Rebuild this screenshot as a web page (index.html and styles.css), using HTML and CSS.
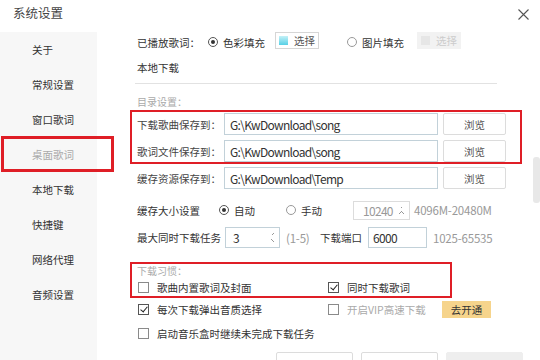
FILE: index.html
```html
<!DOCTYPE html>
<html lang="zh-CN">
  <head>
    <meta charset="UTF-8" />
    <meta name="viewport" content="width=device-width, initial-scale=1.0" />
    <title>系统设置</title>
    <link rel="stylesheet" href="styles.css">
  </head>
  <body>
    <div class="titlebar">
      <span class="title">系统设置</span>
      <svg class="close" width="11" height="11" viewBox="0 0 11 11">
        <path d="M0.5 0.5 L10.5 10.5 M10.5 0.5 L0.5 10.5" stroke="#555" stroke-width="1.1" fill="none" />
      </svg>
    </div>

    <div class="layout">
      <div class="sidebar">
        <div class="nav-item">关于</div>
        <div class="nav-item">常规设置</div>
        <div class="nav-item">窗口歌词</div>
        <div class="nav-item active">桌面歌词</div>
        <div class="nav-item">本地下载</div>
        <div class="nav-item">快捷键</div>
        <div class="nav-item">网络代理</div>
        <div class="nav-item">音频设置</div>
      </div>

      <div class="main">
        <div class="row lyric-row">
          <span class="lbl lbl-lyric">已播放歌词：</span>
          <span class="opt opt-color"><i class="radio checked"></i>色彩填充</span>
          <span class="pick-btn"><i class="swatch"></i>选择</span>
          <span class="opt opt-image"><i class="radio"></i>图片填充</span>
          <span class="pick-btn disabled"><i class="swatch"></i>选择</span>
        </div>

        <div class="section-title">本地下载</div>
        <div class="divider"></div>

        <div class="hint">目录设置：</div>
        <div class="mark mark-dirs">
          <div class="row path-row">
            <span class="lbl lbl-path">下载歌曲保存到：</span>
            <span class="input path-input">G:\KwDownload\song</span>
            <span class="browse">浏览</span>
          </div>
          <div class="row path-row">
            <span class="lbl lbl-path">歌词文件保存到：</span>
            <span class="input path-input">G:\KwDownload\song</span>
            <span class="browse">浏览</span>
          </div>
        </div>
        <div class="row path-row cache-row">
          <span class="lbl lbl-path">缓存资源保存到：</span>
          <span class="input path-input">G:\KwDownload\Temp</span>
          <span class="browse">浏览</span>
        </div>

        <div class="row size-row">
          <span class="lbl lbl-size">缓存大小设置</span>
          <span class="opt opt-auto"><i class="radio checked"></i>自动</span>
          <span class="opt opt-manual"><i class="radio"></i>手动</span>
          <span class="input spin-input disabled size-input">10240<i class="spin"></i></span>
          <span class="note">4096M-20480M</span>
        </div>

        <div class="row task-row">
          <span class="lbl lbl-task">最大同时下载任务</span>
          <span class="input spin-input task-input">3<i class="spin"></i></span>
          <span class="note range">(1-5)</span>
          <span class="lbl lbl-port">下载端口</span>
          <span class="input port-input">6000</span>
          <span class="note">1025-65535</span>
        </div>

        <div class="mark mark-habit">
          <div class="hint habit-hint">下载习惯：</div>
          <div class="row check-row">
            <span class="check-col"><i class="checkbox"></i>歌曲内置歌词及封面</span>
            <span class="check-col"><i class="checkbox checked"></i>同时下载歌词</span>
          </div>
        </div>
        <div class="row check-row quality-row">
          <span class="check-col"><i class="checkbox checked"></i>每次下载弹出音质选择</span>
          <span class="check-col muted"><i class="checkbox"></i>开启VIP高速下载</span>
          <span class="vip-btn">去开通</span>
        </div>
        <div class="row check-row resume-row">
          <span class="check-col"><i class="checkbox"></i>启动音乐盒时继续未完成下载任务</span>
        </div>

        <div class="footer">
          <span class="foot-btn"></span>
          <span class="foot-btn"></span>
          <span class="foot-btn grey"></span>
        </div>

        <div class="scroll-thumb"></div>
      </div>
    </div>
  </body>
</html>
```

FILE: styles.css
```css
body {
  margin: 0;
  width: 540px;
  height: 360px;
  overflow: hidden;
  background: #fff;
  color: #333;
  font-family: "Noto Sans CJK SC", "Noto Sans", sans-serif;
  font-size: 10.5px;
}
.titlebar {
  height: 32px;
  display: flex;
  align-items: center;
  justify-content: space-between;
  padding: 0 11px 0 13px;
  box-sizing: border-box;
}
.title {
  font-size: 12.5px;
  color: #444;
  margin-top: -8px;
}
.close {
  margin-top: -4px;
}
.layout {
  display: flex;
  height: 328px;
}
.sidebar {
  width: 97px;
  flex: none;
  background: #f7f7f7;
}
.nav-item {
  height: 35px;
  line-height: 35px;
  padding-left: 32px;
  color: #333;
  position: relative;
}
.nav-item.active {
  color: #aaa;
}
.nav-item.active::after {
  content: "";
  position: absolute;
  left: 1px;
  top: -1px;
  width: 113px;
  height: 36px;
  border: 3px solid #df1e26;
  box-sizing: border-box;
}
.main {
  flex: 1;
  position: relative;
  padding-left: 40px;
}
.row {
  display: flex;
  align-items: center;
}
.lbl {
  flex: none;
  white-space: nowrap;
}
.lyric-row {
  height: 20px;
}
.lbl-lyric {
  width: 71px;
}
.opt {
  display: inline-flex;
  align-items: center;
  flex: none;
}
.opt-color {
  width: 67px;
}
.opt-image {
  width: 70px;
  margin-left: 28px;
}
.radio {
  width: 10px;
  height: 10px;
  border: 1px solid #999;
  border-radius: 50%;
  box-sizing: border-box;
  margin-right: 5px;
  position: relative;
  flex: none;
}
.radio.checked {
  border-color: #555;
}
.radio.checked::after {
  content: "";
  position: absolute;
  left: 2px;
  top: 2px;
  width: 4px;
  height: 4px;
  border-radius: 50%;
  background: #333;
}
.pick-btn {
  width: 44px;
  height: 17px;
  box-sizing: border-box;
  border: 1px solid #d6d6d6;
  display: inline-flex;
  align-items: center;
  padding-left: 3px;
  color: #555;
  flex: none;
  margin-top: -3px;
}
.swatch {
  width: 9px;
  height: 9px;
  margin-right: 6px;
  background: linear-gradient(#c4f1f7, #57d0e6);
}
.pick-btn.disabled {
  background: #f2f2f2;
  border-color: #f2f2f2;
  color: #ccc;
}
.pick-btn.disabled .swatch {
  background: #e6e6e6;
}
.section-title {
  height: 20px;
  line-height: 20px;
  margin-top: 6px;
}
.divider {
  margin: 5px 0 0 -2px;
  width: 362px;
  border-top: 1px solid #e2e2e2;
}
.hint {
  height: 14px;
  line-height: 14px;
  font-size: 10px;
  color: #aaa;
  margin-top: 11px;
}
.mark {
  border: 2px solid #df1e26;
  margin-left: -7px;
  padding-left: 5px;
}
.mark-dirs {
  width: 374px;
  padding: 1px 9px 0 5px;
  margin-top: 1px;
  display: flex;
  flex-direction: column;
  gap: 5px;
}
.path-row {
  height: 22px;
}
.lbl-path {
  width: 87px;
  color: #444;
}
.input {
  height: 22px;
  box-sizing: border-box;
  border: 1px solid #c2d1d9;
  background: #fff;
  display: inline-flex;
  align-items: center;
  flex: none;
  font-size: 12px;
  letter-spacing: -0.7px;
  color: #333;
  position: relative;
}
.path-input {
  width: 214px;
  padding-left: 5px;
}
.browse {
  width: 63px;
  height: 22px;
  margin-left: 5px;
  box-sizing: border-box;
  border: 1px solid #dcdcdc;
  border-radius: 2px;
  display: inline-flex;
  align-items: center;
  justify-content: center;
  color: #555;
  flex: none;
}
.cache-row {
  margin-top: 3px;
}
.size-row {
  height: 20px;
  margin-top: 11px;
}
.lbl-size {
  width: 82px;
}
.opt-auto {
  width: 67px;
}
.opt-manual {
  width: 67px;
}
.size-input {
  width: 57px;
  height: 19px;
  padding-left: 9px;
  border-color: #dcdcdc;
  color: #999;
}
.spin {
  position: absolute;
  right: 5px;
  top: 50%;
  width: 5px;
  height: 9px;
  margin-top: -5px;
  background:
    linear-gradient(45deg, transparent 50%, #999 50%, #999 62%, transparent 62%) 0 0 / 3px 3px no-repeat,
    linear-gradient(-45deg, transparent 50%, #999 50%, #999 62%, transparent 62%) 2px 0 / 3px 3px no-repeat,
    linear-gradient(135deg, transparent 50%, #999 50%, #999 62%, transparent 62%) 0 6px / 3px 3px no-repeat,
    linear-gradient(-135deg, transparent 50%, #999 50%, #999 62%, transparent 62%) 2px 6px / 3px 3px no-repeat;
}
.note {
  margin-left: 4px;
  color: #999;
  font-size: 11.5px;
  letter-spacing: -0.2px;
  flex: none;
}
.task-row {
  height: 21px;
  margin-top: 7px;
}
.lbl-task {
  width: 88px;
}
.task-input {
  width: 55px;
  height: 21px;
  padding-left: 7px;
}
.range {
  width: 34px;
  margin-left: 6px;
}
.lbl-port {
  width: 48px;
}
.port-input {
  width: 59px;
  height: 21px;
  padding-left: 4px;
}
.port-input + .note {
  margin-left: 6px;
}
.mark-habit {
  width: 313px;
  margin-top: 14px;
}
.habit-hint {
  margin-top: 0;
}
.check-row {
  height: 18px;
}
.check-col {
  width: 190px;
  display: inline-flex;
  align-items: center;
  flex: none;
  white-space: nowrap;
}
.check-col.muted {
  color: #aaa;
  width: 115px;
}
.checkbox {
  width: 11px;
  height: 11px;
  border: 1px solid #8a8a8a;
  box-sizing: border-box;
  margin: 0 8px 0 1px;
  position: relative;
  flex: none;
}
.checkbox.checked {
  border-color: #555;
}
.checkbox.checked::after {
  content: "";
  position: absolute;
  left: 3px;
  top: 0px;
  width: 3px;
  height: 6px;
  border: solid #222;
  border-width: 0 1.5px 1.5px 0;
  transform: rotate(40deg);
}
.quality-row {
  height: 20px;
  margin-top: 1px;
}
.vip-btn {
  width: 49px;
  height: 17px;
  background: #f6d48c;
  display: inline-flex;
  align-items: center;
  justify-content: center;
  color: #333;
  flex: none;
}
.resume-row {
  height: 20px;
  margin-top: 4px;
}
.footer {
  display: flex;
  justify-content: flex-end;
  gap: 8px;
  padding-right: 17px;
  margin-top: 9px;
}
.foot-btn {
  width: 77px;
  height: 24px;
  box-sizing: border-box;
  border: 1px solid #dcdcdc;
  border-radius: 2px;
}
.foot-btn.grey {
  background: #eee;
  border-color: #eee;
}
.scroll-thumb {
  position: absolute;
  right: 0;
  top: 125px;
  width: 7px;
  height: 46px;
  border-radius: 3px;
  background: #e8e8e8;
}
```
